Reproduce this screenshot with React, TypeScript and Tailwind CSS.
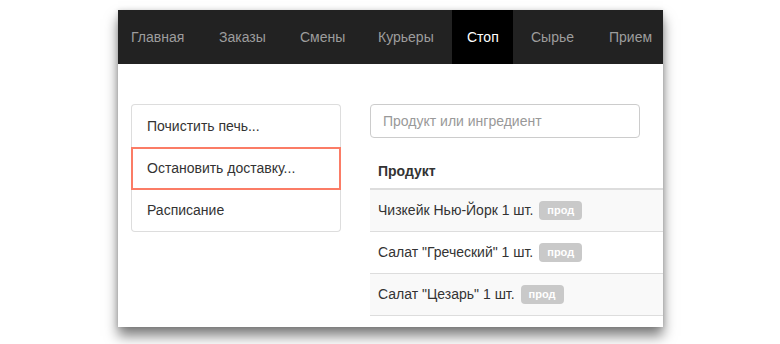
import React from "react";

const navItems = [
  { label: "Главная", cls: "w-[88px] pl-[15px] text-[#9d9d9d]" },
  { label: "Заказы", cls: "w-[81px] pl-[15px] text-[#9d9d9d]" },
  { label: "Смены", cls: "w-[78px] pl-[15px] text-[#9d9d9d]" },
  { label: "Курьеры", cls: "w-[89px] pl-[15px] text-[#9d9d9d]" },
  { label: "Стоп", cls: "w-[61px] pl-[15px] bg-black text-white" },
  { label: "Сырье", cls: "w-[81px] pl-[18px] text-[#9d9d9d]" },
  { label: "Прием", cls: "w-[80px] pl-[15px] text-[#9d9d9d]" },
];

const rows = [
  { name: "Чизкейк Нью-Йорк 1 шт.", tag: "прод" },
  { name: 'Салат "Греческий" 1 шт.', tag: "прод" },
  { name: 'Салат "Цезарь" 1 шт.', tag: "прод" },
];

const Badge = ({ text }: { text: string }) => (
  <span className="inline-flex items-center h-[19px] px-[8px] ml-[6px] rounded-[4px] bg-[#c9c9c9] text-white text-[11px] font-bold leading-none">
    {text}
  </span>
);

const App = () => {
  return (
    <div
      className="w-[780px] h-[344px] bg-white overflow-hidden pt-[10px] pl-[118px]"
      style={{ fontFamily: '"Liberation Sans", Arial, sans-serif' }}
    >
      <div className="w-[545px] h-[317px] bg-white overflow-hidden shadow-[0_9px_12px_rgba(0,0,0,0.5),0_0_5px_rgba(0,0,0,0.15)]">
        {/* navbar */}
        <div className="h-[54px] bg-[#222] flex -ml-[2px]">
          {navItems.map((item) => (
            <div
              key={item.label}
              className={"h-full shrink-0 flex items-center text-[14px] " + item.cls}
            >
              {item.label}
            </div>
          ))}
        </div>

        <div className="flex pt-[40px] pl-[13px]">
          {/* left menu */}
          <div className="w-[210px] shrink-0 text-[14px] text-[#333]">
            <div className="h-[43px] flex items-center px-[15px] border-x border-t border-[#ddd] rounded-t-[4px]">
              Почистить печь...
            </div>
            <div className="h-[43px] flex items-center px-[14px] border-2 border-[#fb7c66]">
              Остановить доставку...
            </div>
            <div className="h-[42px] flex items-center px-[15px] border-x border-b border-[#ddd] rounded-b-[4px]">
              Расписание
            </div>
          </div>

          {/* right side */}
          <div className="ml-[29px] w-[420px] shrink-0">
            <input
              className="w-[270px] h-[34px] border border-[#ccc] rounded-[4px] px-[12px] text-[14px] text-[#555] placeholder:text-[#999] outline-none"
              placeholder="Продукт или ингредиент"
            />
            <div className="mt-[16px] text-[14px] text-[#333]">
              <div className="h-[36px] flex items-center px-[8px] font-bold border-b-2 border-[#ddd]">
                Продукт
              </div>
              {rows.map((r, i) => (
                <div
                  key={r.name}
                  className={
                    "h-[42px] flex items-center px-[8px] border-b border-[#ddd] " +
                    (i % 2 === 0 ? "bg-[#f9f9f9]" : "bg-white")
                  }
                >
                  {r.name}
                  <Badge text={r.tag} />
                </div>
              ))}
            </div>
          </div>
        </div>
      </div>
    </div>
  );
};

export default App;
